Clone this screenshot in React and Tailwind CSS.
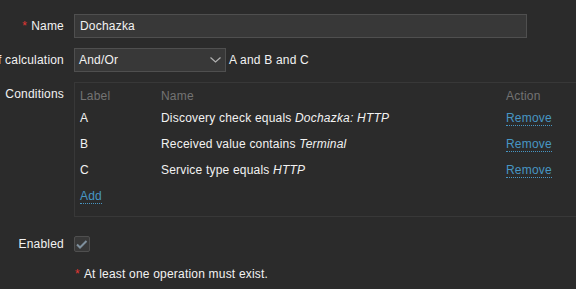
export default function App() {
  const rows = [
    { l: "A", pre: "Discovery check equals ", it: "Dochazka: HTTP" },
    { l: "B", pre: "Received value contains ", it: "Terminal" },
    { l: "C", pre: "Service type equals ", it: "HTTP" },
  ];
  const link =
    "text-[#4796c4] border-b border-dotted border-[#4796c4] cursor-pointer";
  return (
    <div className="w-[576px] h-[289px] overflow-hidden bg-[#2b2b2b] text-[#f2f2f2] text-[12px] leading-[14px] tracking-[0.2px] font-['Liberation_Sans',Arial,sans-serif] pt-[14px]">
      <div className="flex flex-col">
        {/* Name */}
        <div className="flex items-center h-[24px] gap-[10px]">
          <div className="w-[64px] shrink-0 flex justify-end">
            <span className="whitespace-nowrap">
              <span className="text-[#e33734] mr-[4px]">*</span>Name
            </span>
          </div>
          <div className="w-[453px] h-[24px] shrink-0 bg-[#383838] border border-[#4f4f4f] px-[5px] flex items-center">
            Dochazka
          </div>
        </div>

        {/* Type of calculation */}
        <div className="flex items-center h-[24px] gap-[10px] mt-[10px]">
          <div className="w-[64px] shrink-0 flex justify-end">
            <span className="whitespace-nowrap">Type of calculation</span>
          </div>
          <div className="flex items-center">
            <div className="w-[152px] h-[24px] shrink-0 bg-[#383838] border border-[#4f4f4f] pl-[4px] pr-[4px] flex items-center justify-between">
              <span>And/Or</span>
              <svg width="11" height="6" viewBox="0 0 11 6">
                <polyline
                  points="0.5,0.5 5.5,5 10.5,0.5"
                  fill="none"
                  stroke="#b0b0b0"
                  strokeWidth="1.2"
                />
              </svg>
            </div>
            <span className="ml-[3px] whitespace-nowrap">A and B and C</span>
          </div>
        </div>

        {/* Conditions */}
        <div className="flex items-start gap-[10px] mt-[10px]">
          <div className="w-[64px] shrink-0 flex justify-end pt-[5px]">
            <span className="whitespace-nowrap">Conditions</span>
          </div>
          <div className="w-[560px] shrink-0 border border-[#383838] pt-[6px] pb-[1px] px-[5px]">
            <div className="flex h-[22px] text-[#737373]">
              <div className="w-[81px] shrink-0">Label</div>
              <div className="w-[345px] shrink-0">Name</div>
              <div>Action</div>
            </div>
            {rows.map((r) => (
              <div key={r.l} className="flex items-start h-[26px]">
                <div className="w-[81px] shrink-0">{r.l}</div>
                <div className="w-[345px] shrink-0 whitespace-nowrap">
                  {r.pre}
                  <i>{r.it}</i>
                </div>
                <div>
                  <span className={link}>Remove</span>
                </div>
              </div>
            ))}
            <div className="h-[26px]">
              <span className={link}>Add</span>
            </div>
          </div>
        </div>

        {/* Enabled */}
        <div className="flex items-center gap-[10px] mt-[19px] h-[16px]">
          <div className="w-[64px] shrink-0 flex justify-end">
            <span className="whitespace-nowrap">Enabled</span>
          </div>
          <div className="w-[16px] h-[16px] bg-[#383838] border border-[#4f4f4f] rounded-[2px] flex items-center justify-center">
            <svg width="14" height="14" viewBox="0 0 14 14">
              <polyline
                points="2,7.5 5,10.5 11.5,4"
                fill="none"
                stroke="#7f909d"
                strokeWidth="2"
              />
            </svg>
          </div>
        </div>

        {/* Message */}
        <div className="mt-[15px] pl-[75px] whitespace-nowrap">
          <span className="text-[#e33734] mr-[4px]">*</span>At least one
          operation must exist.
        </div>
      </div>
    </div>
  );
}
